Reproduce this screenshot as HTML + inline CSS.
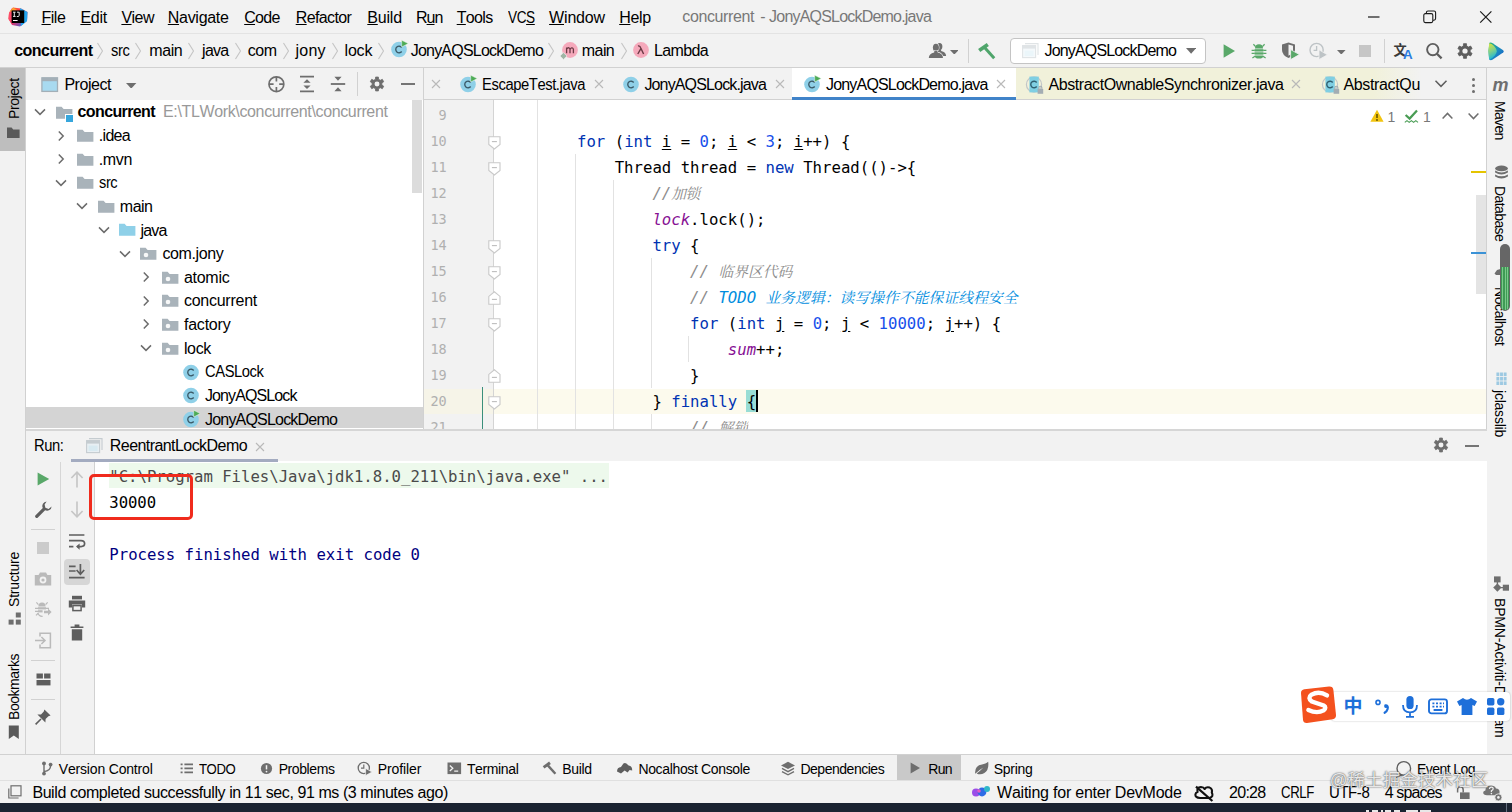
<!DOCTYPE html>
<html lang="en"><head><meta charset="utf-8"><title>concurrent - JonyAQSLockDemo.java</title>
<style>
html,body{margin:0;padding:0;}
body{width:1512px;height:812px;overflow:hidden;position:relative;background:#f2f2f2;font-family:'Liberation Sans', 'Noto Sans CJK SC', sans-serif;}
#root{position:absolute;left:0;top:0;width:1512px;height:812px;overflow:hidden;}
#root div,#root span.t,#root svg{position:absolute;}
span.t{white-space:pre;line-height:1;font-kerning:none;}
</style></head><body><div id="root">
<div style="left:0px;top:0px;width:1512px;height:33px;background:#f2f2f2;"></div>
<div style="left:0px;top:33px;width:1512px;height:1px;background:#e3e3e3;"></div>
<div style="left:0px;top:34px;width:1512px;height:33px;background:#f2f2f2;"></div>
<div style="left:0px;top:67px;width:1512px;height:1px;background:#d1d1d1;"></div>
<div style="left:0px;top:68px;width:25px;height:687px;background:#f2f2f2;"></div>
<div style="left:0px;top:68px;width:25px;height:83px;background:#bebebe;"></div>
<div style="left:25px;top:68px;width:1px;height:687px;background:#d1d1d1;"></div>
<div style="left:26px;top:68px;width:397px;height:32px;background:#f2f2f2;"></div>
<div style="left:26px;top:100px;width:397px;height:329px;background:#ffffff;"></div>
<div style="left:26px;top:407.4px;width:397px;height:21px;background:#d4d4d4;"></div>
<div style="left:412px;top:100px;width:10px;height:93px;background:#dcdcdc;"></div>
<div style="left:423px;top:68px;width:1px;height:361px;background:#d1d1d1;"></div>
<div style="left:424px;top:68px;width:1063px;height:32px;background:#f2f2f2;"></div>
<div style="left:424px;top:99px;width:1063px;height:1px;background:#d1d1d1;"></div>
<div style="left:792px;top:68px;width:224px;height:31px;background:#ffffff;"></div>
<div style="left:1016px;top:68px;width:406px;height:31px;background:linear-gradient(90deg,#f1f1da 0,#f1f1da 88%,#f2f2f2 100%);"></div>
<div style="left:792px;top:97px;width:224px;height:3px;background:#4083c9;"></div>
<div style="left:424px;top:100px;width:1063px;height:329px;background:#ffffff;"></div>
<div style="left:424px;top:100px;width:69px;height:329px;background:#f2f2f2;"></div>
<div style="left:424px;top:388.5px;width:1063px;height:25px;background:#fcfaed;"></div>
<div style="left:424px;top:388.5px;width:69px;height:25px;background:#f6f4e8;"></div>
<div style="left:493px;top:100px;width:1px;height:329px;background:#d4d4d4;"></div>
<div style="left:482px;top:387px;width:1.2px;height:42px;background:#3a8f7a;"></div>
<div style="left:537px;top:100px;width:1px;height:329px;background:#e2e2e2;"></div>
<div style="left:575px;top:154px;width:1px;height:275px;background:#e2e2e2;"></div>
<div style="left:613px;top:180px;width:1px;height:249px;background:#e2e2e2;"></div>
<div style="left:651px;top:258px;width:1px;height:130px;background:#e2e2e2;"></div>
<div style="left:688px;top:336px;width:1px;height:26px;background:#e2e2e2;"></div>
<div style="left:651px;top:414px;width:1px;height:15px;background:#e2e2e2;"></div>
<div style="left:1476px;top:195px;width:11px;height:99px;background:#e4e4e4;"></div>
<div style="left:1471px;top:171px;width:16px;height:2px;background:#e5c400;"></div>
<div style="left:1471px;top:252px;width:16px;height:2px;background:#3b92d6;"></div>
<div style="left:1487px;top:68px;width:25px;height:687px;background:#f2f2f2;"></div>
<div style="left:1486px;top:68px;width:1px;height:687px;background:#d1d1d1;"></div>
<div style="left:26px;top:429.2px;width:1461px;height:1.5px;background:#d6d6d6;"></div>
<div style="left:26px;top:430.5px;width:1461px;height:30.5px;background:#f2f2f2;"></div>
<div style="left:26px;top:461px;width:68px;height:294px;background:#f2f2f2;"></div>
<div style="left:59.5px;top:462px;width:1px;height:293px;background:#d6d6d6;"></div>
<div style="left:94px;top:461px;width:1px;height:294px;background:#d1d1d1;"></div>
<div style="left:95px;top:461px;width:1392px;height:294px;background:#ffffff;"></div>
<div style="left:71px;top:458.6px;width:207px;height:3px;background:#a3abc0;"></div>
<div style="left:109px;top:463px;width:500px;height:25px;background:#edf9ec;"></div>
<div style="left:64px;top:559px;width:26px;height:26px;background:#d6d6d6;border-radius:4px;"></div>
<div style="left:31px;top:529px;width:24px;height:1px;background:#d1d1d1;"></div>
<div style="left:31px;top:660px;width:24px;height:1px;background:#d1d1d1;"></div>
<div style="left:31px;top:699px;width:24px;height:1px;background:#d1d1d1;"></div>
<div style="left:0px;top:755px;width:1512px;height:26px;background:#f2f2f2;"></div>
<div style="left:0px;top:754px;width:1512px;height:1px;background:#d1d1d1;"></div>
<div style="left:897px;top:755px;width:64px;height:25px;background:#c9c9c9;"></div>
<div style="left:0px;top:780px;width:1512px;height:1px;background:#e0e0e0;"></div>
<div style="left:0px;top:781px;width:1512px;height:22px;background:#f2f2f2;"></div>
<div style="left:0px;top:802.5px;width:1512px;height:9.5px;background:#1b2331;"></div>
<svg style="left:8px;top:7px;" width="20" height="20" viewBox="0 0 20 20"><defs><linearGradient id="lg1" x1="0" y1="0" x2="1" y2="1"><stop offset="0" stop-color="#fc801d"/><stop offset="0.45" stop-color="#fe2857"/><stop offset="1" stop-color="#087cfa"/></linearGradient></defs>
<path d="M1 6 L5 0.5 L13 1.5 L19.5 5 L19 14 L12 19.5 L4 18 L0.5 12 Z" fill="url(#lg1)"/><path d="M12 1 L19.5 5 L19 14 L13 19 Z" fill="#21a5ee"/><path d="M1 6 L4 1 L8 4 L4 17 L0.5 12 Z" fill="#fd4c6a"/><path d="M1.5 5 L5 0.5 L9 3 Z" fill="#fda22c"/>
<rect x="3.6" y="3.4" width="12.6" height="12.6" fill="#000"/><rect x="5" y="13" width="4.6" height="1" fill="#fff"/>
<path d="M5 5.2 H7.6 M6.3 5.2 V9.4 M5 9.4 H7.6 M9 5.2 H11.2 V8.4 Q11.2 9.5 10 9.5 H8.8" fill="none" stroke="#fff" stroke-width="0.9"/></svg>
<svg style="left:1367px;top:10px;" width="14" height="14" viewBox="0 0 14 14"><path d="M1 7 H12.5" stroke="#1a1a1a" stroke-width="1.2"/></svg>
<svg style="left:1422px;top:9px;" width="16" height="16" viewBox="0 0 16 16"><rect x="1.8" y="4.6" width="9" height="9" rx="1.5" fill="none" stroke="#1a1a1a" stroke-width="1.1"/><path d="M4.4 4.4 V3.6 Q4.4 2 6 2 H12 Q13.6 2 13.6 3.6 V9.6 Q13.6 11.2 12 11.2 H11" fill="none" stroke="#1a1a1a" stroke-width="1.1"/></svg>
<svg style="left:1478px;top:8.5px;" width="16" height="16" viewBox="0 0 16 16"><path d="M2.2 2.4 L13.4 13.6 M13.4 2.4 L2.2 13.6" stroke="#1a1a1a" stroke-width="1.2" fill="none"/></svg>
<svg style="left:95.6px;top:42px;" width="8" height="18" viewBox="0 0 8 18"><path d="M1.5 1 L6.5 9 L1.5 17" fill="none" stroke="#c4c4c4" stroke-width="1.1"/></svg>
<svg style="left:133.5px;top:42px;" width="8" height="18" viewBox="0 0 8 18"><path d="M1.5 1 L6.5 9 L1.5 17" fill="none" stroke="#c4c4c4" stroke-width="1.1"/></svg>
<svg style="left:187.2px;top:42px;" width="8" height="18" viewBox="0 0 8 18"><path d="M1.5 1 L6.5 9 L1.5 17" fill="none" stroke="#c4c4c4" stroke-width="1.1"/></svg>
<svg style="left:233.8px;top:42px;" width="8" height="18" viewBox="0 0 8 18"><path d="M1.5 1 L6.5 9 L1.5 17" fill="none" stroke="#c4c4c4" stroke-width="1.1"/></svg>
<svg style="left:281.5px;top:42px;" width="8" height="18" viewBox="0 0 8 18"><path d="M1.5 1 L6.5 9 L1.5 17" fill="none" stroke="#c4c4c4" stroke-width="1.1"/></svg>
<svg style="left:331px;top:42px;" width="8" height="18" viewBox="0 0 8 18"><path d="M1.5 1 L6.5 9 L1.5 17" fill="none" stroke="#c4c4c4" stroke-width="1.1"/></svg>
<svg style="left:377px;top:42px;" width="8" height="18" viewBox="0 0 8 18"><path d="M1.5 1 L6.5 9 L1.5 17" fill="none" stroke="#c4c4c4" stroke-width="1.1"/></svg>
<svg style="left:547.4px;top:42px;" width="8" height="18" viewBox="0 0 8 18"><path d="M1.5 1 L6.5 9 L1.5 17" fill="none" stroke="#c4c4c4" stroke-width="1.1"/></svg>
<svg style="left:619.8px;top:42px;" width="8" height="18" viewBox="0 0 8 18"><path d="M1.5 1 L6.5 9 L1.5 17" fill="none" stroke="#c4c4c4" stroke-width="1.1"/></svg>
<svg style="left:389px;top:39.3px;" width="20" height="21" viewBox="0 0 20 21"><circle cx="10" cy="10.5" r="7.8" fill="#8fd0e8"/><path d="M12.7 8.5 A3.3 3.3 0 1 0 12.7 12.5" fill="none" stroke="#3b5a68" stroke-width="1.35"/><path d="M12.7 1.2 L19.2 4.6 L12.7 8 Z" fill="#4dab55" stroke="#eef7ee" stroke-width="0.5"/></svg>
<svg style="left:560.5px;top:40.5px;" width="18" height="18" viewBox="0 0 18 18"><circle cx="9" cy="9" r="7.9" fill="#f5a9bb"/><path d="M5.6 12.2 V6.6 M5.6 8 Q6.9 6.2 8.2 7 Q9 7.5 9 8.6 V12.2 M9 8.4 Q10.2 6.2 11.6 7 Q12.4 7.5 12.4 8.6 V12.2" fill="none" stroke="#6b3a45" stroke-width="1.3"/></svg>
<svg style="left:559px;top:50.5px;" width="9" height="9" viewBox="0 0 9 9"><path d="M1 5 L4.5 1.6 L8 5 L4.5 8.4 Z" fill="#9fb5a5" stroke="#f2f2f2" stroke-width="0.6"/></svg>
<svg style="left:631.5px;top:40.5px;" width="18" height="18" viewBox="0 0 18 18"><circle cx="9" cy="9" r="7.9" fill="#f5a9bb"/><path d="M6 5 Q8 4.4 8.8 7 L11.6 13 M8.9 7.6 L5.8 13" fill="none" stroke="#6b3a45" stroke-width="1.4"/></svg>
<svg style="left:927px;top:42px;" width="22" height="18" viewBox="0 0 22 18"><g fill="#6e6e6e" transform="translate(4.4,-0.6) scale(0.92)"><ellipse cx="8.9" cy="5.6" rx="3" ry="3.9"/><path d="M1.8 16 Q1.9 11.6 7.2 10.4 L7.4 8.6 H10.4 L10.6 10.4 Q15.9 11.6 16 16 Z"/></g><g fill="#6e6e6e" stroke="#f2f2f2" stroke-width="1.1" paint-order="stroke"><ellipse cx="8.9" cy="5.6" rx="3" ry="3.9"/><path d="M1.8 16 Q1.9 11.6 7.2 10.4 L7.4 8.6 H10.4 L10.6 10.4 Q15.9 11.6 16 16 Z"/></g></svg>
<svg style="left:949.7px;top:49.5px;" width="8.6" height="4.6" viewBox="0 0 8.6 4.6"><path d="M0 0 H8.6 L4.3 4.6 Z" fill="#6e6e6e"/></svg>
<div style="left:968px;top:39px;width:1px;height:24px;background:#d1d1d1;"></div>
<svg style="left:977px;top:41.7px;" width="20" height="19" viewBox="0 0 20 19"><path d="M2.2 8.4 L10.8 2.4" stroke="#4fa56b" stroke-width="3.7" fill="none"/><path d="M7.6 5.6 L17.2 16.2" stroke="#4fa56b" stroke-width="3" fill="none"/></svg>
<div style="left:1010px;top:37.5px;width:196px;height:26px;box-sizing:border-box;border:1px solid #c4c4c4;border-radius:4px;background:#fff;"></div>
<svg style="left:1021.5px;top:43px;" width="17" height="16" viewBox="0 0 17 16"><g opacity="0.3"><rect x="0.6" y="2.6" width="13" height="12" fill="#dfeef5" stroke="#9aa7b0" stroke-width="1.1"/><rect x="0.6" y="2.6" width="13" height="3" fill="#9aa7b0"/><path d="M3 0.6 H16 V12" fill="none" stroke="#9aa7b0" stroke-width="1.1"/><rect x="2.6" y="7.6" width="9" height="5.4" fill="#bfe3f1"/></g></svg>
<svg style="left:1185.9px;top:48.4px;" width="10.2" height="5.8" viewBox="0 0 10.2 5.8"><path d="M0 0 H10.2 L5.1 5.8 Z" fill="#6e6e6e"/></svg>
<svg style="left:1223px;top:44px;" width="13" height="14" viewBox="0 0 13 14"><path d="M0.6 0.3 L12 7 L0.6 13.7 Z" fill="#59a869"/></svg>
<svg style="left:1251px;top:43px;" width="16" height="16" viewBox="0 0 16 16"><path d="M4 5.4 Q4 1.2 8 1.2 Q12 1.2 12 5.4 Z" fill="#59a869"/><rect x="3.6" y="6.2" width="8.8" height="2.3" fill="#59a869"/><rect x="3.6" y="9.3" width="8.8" height="2.3" fill="#59a869"/><path d="M3.6 12.4 H12.4 Q12 15.6 8 15.6 Q4 15.6 3.6 12.4 Z" fill="#59a869"/>
<path d="M3.8 7.3 H0.6 M12.2 7.3 H15.4 M3.8 10.4 H0.6 M12.2 10.4 H15.4 M4 13.2 L1.4 15 M12 13.2 L14.6 15 M4.6 3.6 L2.4 1.2 M11.4 3.6 L13.6 1.2" stroke="#59a869" stroke-width="1.3" fill="none"/></svg>
<svg style="left:1281px;top:42px;" width="19" height="18" viewBox="0 0 19 18"><path d="M1 2.4 L7.5 0.6 L14 2.4 V8 Q14 13 7.5 16 Q1 13 1 8 Z" fill="#6e6e6e"/><path d="M7.5 2.6 L12 3.8 V8 Q12 11.4 7.5 13.8 Z" fill="#f2f2f2"/><path d="M9.6 7.6 L18.4 12.6 L9.6 17.6 Z" fill="#59a869" stroke="#f2f2f2" stroke-width="0.8"/></svg>
<svg style="left:1309px;top:42px;" width="19" height="18" viewBox="0 0 19 18"><g opacity="0.45"><circle cx="7.6" cy="8" r="6.6" fill="none" stroke="#7f8b91" stroke-width="1.4"/><path d="M7.6 4 V8.4 H4.6" fill="none" stroke="#7f8b91" stroke-width="1.3"/><path d="M10 7.8 L18.4 12.8 L10 17.6 Z" fill="#7f8b91" stroke="#f2f2f2" stroke-width="0.8"/></g></svg>
<svg style="left:1337.0px;top:49.5px;" width="8.6" height="4.6" viewBox="0 0 8.6 4.6"><path d="M0 0 H8.6 L4.3 4.6 Z" fill="#6e6e6e"/></svg>
<div style="left:1359px;top:45.3px;width:12px;height:11.5px;background:#c6c6c6;"></div>
<div style="left:1384px;top:39px;width:1px;height:24px;background:#d1d1d1;"></div>
<svg style="left:1425px;top:42px;" width="18" height="18" viewBox="0 0 18 18"><circle cx="7.8" cy="7.6" r="5.7" fill="none" stroke="#5e5e5e" stroke-width="1.9"/><path d="M11.9 11.7 L16.6 16.4" stroke="#5e5e5e" stroke-width="2.3"/></svg>
<svg style="left:1455.7px;top:42.3px;" width="18" height="18" viewBox="0 0 18 18"><path d="M7.51 1.65 L10.49 1.65 L10.65 4.02 L12.49 5.08 L14.62 4.03 L16.11 6.62 L14.14 7.94 L14.14 10.06 L16.11 11.38 L14.62 13.97 L12.49 12.92 L10.65 13.98 L10.49 16.35 L7.51 16.35 L7.35 13.98 L5.51 12.92 L3.38 13.97 L1.89 11.38 L3.86 10.06 L3.86 7.94 L1.89 6.62 L3.38 4.03 L5.51 5.08 L7.35 4.02 Z" fill="#5e5e5e" stroke="#5e5e5e" stroke-width="0.8" stroke-linejoin="round"/><circle cx="9" cy="9" r="2.62" fill="#f2f2f2"/></svg>
<svg style="left:1487px;top:41.5px;" width="18" height="19" viewBox="0 0 18 19"><defs><linearGradient id="lg2" x1="0" y1="0" x2="0.3" y2="1"><stop offset="0" stop-color="#dbe63c"/><stop offset="0.55" stop-color="#7fd08a"/><stop offset="1" stop-color="#1fb6d6"/></linearGradient><linearGradient id="lg3" x1="0" y1="0" x2="1" y2="1"><stop offset="0" stop-color="#22b573"/><stop offset="0.5" stop-color="#1a8fc0"/><stop offset="1" stop-color="#1a55c8"/></linearGradient></defs>
<path d="M2.4 0.8 Q4 0.2 5.6 1.2 L16.2 8.2 Q17.4 9.4 16.2 10.6 L5.4 17.8 Q3.6 18.8 2.2 17.6 Q0.6 9 2.4 0.8 Z" fill="url(#lg3)"/><path d="M2.2 1.6 Q3.4 1.2 4.6 2 Q9.6 5.6 9.8 9.4 Q9.4 13 3.4 17.2 Q2.4 17.6 2 16.8 Q0.6 9 2.2 1.6 Z" fill="url(#lg2)"/></svg>
<svg style="left:7px;top:127px;" width="13" height="12" viewBox="0 0 13 12"><path d="M0 0.6 H4.6 L6.2 2.4 H12.6 V11 H0 Z" fill="#5a5a5a"/></svg>
<svg style="left:7.5px;top:612px;" width="14" height="14" viewBox="0 0 14 14"><rect x="7.8" y="0.5" width="5" height="5" fill="#6e6e6e"/><rect x="0.6" y="7.6" width="5" height="5" fill="#6e6e6e"/><rect x="7.8" y="7.6" width="5" height="5" fill="#6e6e6e"/></svg>
<svg style="left:8px;top:725px;" width="12" height="15" viewBox="0 0 12 15"><path d="M0.8 0.6 H10.8 V14 L5.8 10.4 L0.8 14 Z" fill="#5a5a5a"/></svg>
<svg style="left:41px;top:77.3px;" width="18" height="16" viewBox="0 0 18 16"><rect x="0.9" y="0.8" width="15.6" height="13.6" fill="#a8daf0" stroke="#a3afb7" stroke-width="1.3"/><rect x="0.9" y="0.8" width="15.6" height="3.4" fill="#a3afb7"/></svg>
<svg style="left:126.3px;top:82.60000000000001px;" width="10.4" height="5.6" viewBox="0 0 10.4 5.6"><path d="M0 0 H10.4 L5.2 5.6 Z" fill="#6e6e6e"/></svg>
<svg style="left:267px;top:75px;" width="19" height="19" viewBox="0 0 19 19"><circle cx="9.4" cy="9.2" r="7.4" fill="none" stroke="#6e6e6e" stroke-width="1.7"/><path d="M9.4 1.7 V6.4 M9.4 12 V16.7 M1.9 9.2 H6.6 M12.2 9.2 H16.9" stroke="#6e6e6e" stroke-width="1.7"/></svg>
<svg style="left:299px;top:75px;" width="16" height="18" viewBox="0 0 16 18"><path d="M1 1.6 H15 M1 16.4 H15" stroke="#6e6e6e" stroke-width="1.8"/><path d="M4.4 7.8 L8 4.2 L11.6 7.8 Z M4.4 10.4 L8 14 L11.6 10.4 Z" fill="#6e6e6e"/></svg>
<svg style="left:330px;top:75px;" width="16" height="18" viewBox="0 0 16 18"><path d="M0.8 9 H15.2" stroke="#6e6e6e" stroke-width="1.8"/><path d="M4.4 1.8 L8 5.8 L11.6 1.8 Z M4.4 16.2 L8 12.2 L11.6 16.2 Z" fill="#6e6e6e"/></svg>
<div style="left:357px;top:72px;width:1px;height:24px;background:#d1d1d1;"></div>
<svg style="left:368px;top:75.3px;" width="18" height="18" viewBox="0 0 18 18"><path d="M7.59 2.04 L10.41 2.04 L10.56 4.28 L12.30 5.29 L14.32 4.30 L15.73 6.74 L13.87 8.00 L13.87 10.00 L15.73 11.26 L14.32 13.70 L12.30 12.71 L10.56 13.72 L10.41 15.96 L7.59 15.96 L7.44 13.72 L5.70 12.71 L3.68 13.70 L2.27 11.26 L4.13 10.00 L4.13 8.00 L2.27 6.74 L3.68 4.30 L5.70 5.29 L7.44 4.28 Z" fill="#6e6e6e" stroke="#6e6e6e" stroke-width="0.8" stroke-linejoin="round"/><circle cx="9" cy="9" r="2.48" fill="#f2f2f2"/></svg>
<div style="left:400.8px;top:83.3px;width:14.4px;height:2px;background:#757575;"></div>
<svg style="left:33.6px;top:107.9px;" width="12" height="8" viewBox="0 0 12 8"><path d="M1 1.4 L6 6.4 L11 1.4" fill="none" stroke="#6c6c6c" stroke-width="1.5"/></svg>
<svg style="left:55.5px;top:105.8px;" width="17" height="13" viewBox="0 0 17 13"><path d="M0 0.8 H5.6 L7.6 3 H16.4 V12.8 H0 Z" fill="#a9b3ba"/></svg>
<div style="left:66px;top:115px;width:7.2px;height:6.8px;background:#37a6dc;outline:1px solid #fff;"></div>
<svg style="left:57px;top:129.52px;" width="8" height="12" viewBox="0 0 8 12"><path d="M1.8 1.4 L6.2 6 L1.8 10.6" fill="none" stroke="#6c6c6c" stroke-width="1.5"/></svg>
<svg style="left:76.8px;top:128.92000000000002px;" width="17" height="13" viewBox="0 0 17 13"><path d="M0 0.8 H5.6 L7.6 3 H16.4 V12.8 H0 Z" fill="#a9b3ba"/></svg>
<svg style="left:57px;top:153.14000000000001px;" width="8" height="12" viewBox="0 0 8 12"><path d="M1.8 1.4 L6.2 6 L1.8 10.6" fill="none" stroke="#6c6c6c" stroke-width="1.5"/></svg>
<svg style="left:76.8px;top:152.54000000000002px;" width="17" height="13" viewBox="0 0 17 13"><path d="M0 0.8 H5.6 L7.6 3 H16.4 V12.8 H0 Z" fill="#a9b3ba"/></svg>
<svg style="left:55px;top:178.76px;" width="12" height="8" viewBox="0 0 12 8"><path d="M1 1.4 L6 6.4 L11 1.4" fill="none" stroke="#6c6c6c" stroke-width="1.5"/></svg>
<svg style="left:76.8px;top:176.16px;" width="17" height="13" viewBox="0 0 17 13"><path d="M0 0.8 H5.6 L7.6 3 H16.4 V12.8 H0 Z" fill="#a9b3ba"/></svg>
<svg style="left:76.3px;top:202.38px;" width="12" height="8" viewBox="0 0 12 8"><path d="M1 1.4 L6 6.4 L11 1.4" fill="none" stroke="#6c6c6c" stroke-width="1.5"/></svg>
<svg style="left:98.2px;top:199.78px;" width="17" height="13" viewBox="0 0 17 13"><path d="M0 0.8 H5.6 L7.6 3 H16.4 V12.8 H0 Z" fill="#a9b3ba"/></svg>
<svg style="left:97.6px;top:226.0px;" width="12" height="8" viewBox="0 0 12 8"><path d="M1 1.4 L6 6.4 L11 1.4" fill="none" stroke="#6c6c6c" stroke-width="1.5"/></svg>
<svg style="left:118.9px;top:223.4px;" width="17" height="13" viewBox="0 0 17 13"><path d="M0 0.8 H5.6 L7.6 3 H16.4 V12.8 H0 Z" fill="#8fd0e8"/></svg>
<svg style="left:119px;top:249.62px;" width="12" height="8" viewBox="0 0 12 8"><path d="M1 1.4 L6 6.4 L11 1.4" fill="none" stroke="#6c6c6c" stroke-width="1.5"/></svg>
<svg style="left:140.4px;top:247.02px;" width="17" height="13" viewBox="0 0 17 13"><path d="M0 0.8 H5.6 L7.6 3 H16.4 V12.8 H0 Z" fill="#a9b3ba"/><circle cx="6" cy="8" r="2.3" fill="#ffffff" opacity="0.9"/></svg>
<svg style="left:142.4px;top:271.24px;" width="8" height="12" viewBox="0 0 8 12"><path d="M1.8 1.4 L6.2 6 L1.8 10.6" fill="none" stroke="#6c6c6c" stroke-width="1.5"/></svg>
<svg style="left:161.8px;top:270.64px;" width="17" height="13" viewBox="0 0 17 13"><path d="M0 0.8 H5.6 L7.6 3 H16.4 V12.8 H0 Z" fill="#a9b3ba"/><circle cx="6" cy="8" r="2.3" fill="#ffffff" opacity="0.9"/></svg>
<svg style="left:142.4px;top:294.86px;" width="8" height="12" viewBox="0 0 8 12"><path d="M1.8 1.4 L6.2 6 L1.8 10.6" fill="none" stroke="#6c6c6c" stroke-width="1.5"/></svg>
<svg style="left:161.8px;top:294.26px;" width="17" height="13" viewBox="0 0 17 13"><path d="M0 0.8 H5.6 L7.6 3 H16.4 V12.8 H0 Z" fill="#a9b3ba"/><circle cx="6" cy="8" r="2.3" fill="#ffffff" opacity="0.9"/></svg>
<svg style="left:142.4px;top:318.48px;" width="8" height="12" viewBox="0 0 8 12"><path d="M1.8 1.4 L6.2 6 L1.8 10.6" fill="none" stroke="#6c6c6c" stroke-width="1.5"/></svg>
<svg style="left:161.8px;top:317.88px;" width="17" height="13" viewBox="0 0 17 13"><path d="M0 0.8 H5.6 L7.6 3 H16.4 V12.8 H0 Z" fill="#a9b3ba"/><circle cx="6" cy="8" r="2.3" fill="#ffffff" opacity="0.9"/></svg>
<svg style="left:140.4px;top:344.1px;" width="12" height="8" viewBox="0 0 12 8"><path d="M1 1.4 L6 6.4 L11 1.4" fill="none" stroke="#6c6c6c" stroke-width="1.5"/></svg>
<svg style="left:161.8px;top:341.5px;" width="17" height="13" viewBox="0 0 17 13"><path d="M0 0.8 H5.6 L7.6 3 H16.4 V12.8 H0 Z" fill="#a9b3ba"/><circle cx="6" cy="8" r="2.3" fill="#ffffff" opacity="0.9"/></svg>
<svg style="left:181.2px;top:361.52000000000004px;" width="20" height="21" viewBox="0 0 20 21"><circle cx="10" cy="10.5" r="7.8" fill="#8fd0e8"/><path d="M12.7 8.5 A3.3 3.3 0 1 0 12.7 12.5" fill="none" stroke="#3b5a68" stroke-width="1.35"/></svg>
<svg style="left:181.2px;top:385.14000000000004px;" width="20" height="21" viewBox="0 0 20 21"><circle cx="10" cy="10.5" r="7.8" fill="#8fd0e8"/><path d="M12.7 8.5 A3.3 3.3 0 1 0 12.7 12.5" fill="none" stroke="#3b5a68" stroke-width="1.35"/></svg>
<svg style="left:181.2px;top:408.76000000000005px;" width="20" height="21" viewBox="0 0 20 21"><circle cx="10" cy="10.5" r="7.8" fill="#8fd0e8"/><path d="M12.7 8.5 A3.3 3.3 0 1 0 12.7 12.5" fill="none" stroke="#3b5a68" stroke-width="1.35"/><path d="M12.7 1.2 L19.2 4.6 L12.7 8 Z" fill="#4dab55" stroke="#eef7ee" stroke-width="0.5"/></svg>
<svg style="left:430.3px;top:78px;" width="12" height="12" viewBox="0 0 12 12"><path d="M2 2 L10 10 M10 2 L2 10" stroke="#b9b9b9" stroke-width="1.1" fill="none"/></svg>
<svg style="left:458px;top:73.5px;" width="20" height="21" viewBox="0 0 20 21"><circle cx="10" cy="10.5" r="7.8" fill="#8fd0e8"/><path d="M12.7 8.5 A3.3 3.3 0 1 0 12.7 12.5" fill="none" stroke="#3b5a68" stroke-width="1.35"/><path d="M12.7 1.2 L19.2 4.6 L12.7 8 Z" fill="#4dab55" stroke="#eef7ee" stroke-width="0.5"/></svg>
<svg style="left:593px;top:78px;" width="12" height="12" viewBox="0 0 12 12"><path d="M2 2 L10 10 M10 2 L2 10" stroke="#b9b9b9" stroke-width="1.1" fill="none"/></svg>
<svg style="left:620.5px;top:73.5px;" width="20" height="21" viewBox="0 0 20 21"><circle cx="10" cy="10.5" r="7.8" fill="#8fd0e8"/><path d="M12.7 8.5 A3.3 3.3 0 1 0 12.7 12.5" fill="none" stroke="#3b5a68" stroke-width="1.35"/></svg>
<svg style="left:773.8px;top:78px;" width="12" height="12" viewBox="0 0 12 12"><path d="M2 2 L10 10 M10 2 L2 10" stroke="#b9b9b9" stroke-width="1.1" fill="none"/></svg>
<svg style="left:802.3px;top:73.5px;" width="20" height="21" viewBox="0 0 20 21"><circle cx="10" cy="10.5" r="7.8" fill="#8fd0e8"/><path d="M12.7 8.5 A3.3 3.3 0 1 0 12.7 12.5" fill="none" stroke="#3b5a68" stroke-width="1.35"/><path d="M12.7 1.2 L19.2 4.6 L12.7 8 Z" fill="#4dab55" stroke="#eef7ee" stroke-width="0.5"/></svg>
<svg style="left:995px;top:78px;" width="12" height="12" viewBox="0 0 12 12"><path d="M2 2 L10 10 M10 2 L2 10" stroke="#b9b9b9" stroke-width="1.1" fill="none"/></svg>
<svg style="left:1024px;top:73.5px;" width="20" height="21" viewBox="0 0 20 21"><circle cx="10" cy="10.5" r="7.6" fill="none" stroke="#c2c6c8" stroke-width="1.2"/><rect x="5.4" y="2.6" width="9.4" height="15.8" fill="#7fcfe3"/><path d="M12.7 8.5 A3.3 3.3 0 1 0 12.7 12.5" fill="none" stroke="#2f5f70" stroke-width="1.4"/><rect x="13.6" y="15" width="5.6" height="4.8" fill="#a3adb3"/><path d="M14.9 15 V13.8 A1.5 1.5 0 0 1 17.9 13.8 V15" fill="none" stroke="#a3adb3" stroke-width="1.1"/></svg>
<svg style="left:1290px;top:78px;" width="12" height="12" viewBox="0 0 12 12"><path d="M2 2 L10 10 M10 2 L2 10" stroke="#b9b9b9" stroke-width="1.1" fill="none"/></svg>
<svg style="left:1319.5px;top:73.5px;" width="20" height="21" viewBox="0 0 20 21"><circle cx="10" cy="10.5" r="7.6" fill="none" stroke="#c2c6c8" stroke-width="1.2"/><rect x="5.4" y="2.6" width="9.4" height="15.8" fill="#7fcfe3"/><path d="M12.7 8.5 A3.3 3.3 0 1 0 12.7 12.5" fill="none" stroke="#2f5f70" stroke-width="1.4"/><rect x="13.6" y="15" width="5.6" height="4.8" fill="#a3adb3"/><path d="M14.9 15 V13.8 A1.5 1.5 0 0 1 17.9 13.8 V15" fill="none" stroke="#a3adb3" stroke-width="1.1"/></svg>
<svg style="left:1434px;top:79px;" width="14" height="10" viewBox="0 0 14 10"><path d="M1.5 1.8 L7 7.4 L12.5 1.8" fill="none" stroke="#5e5e5e" stroke-width="1.5"/></svg>
<div style="left:1472px;top:77.5px;width:3px;height:3px;border-radius:50%;background:#6e6e6e;"></div>
<div style="left:1472px;top:83.8px;width:3px;height:3px;border-radius:50%;background:#6e6e6e;"></div>
<div style="left:1472px;top:90.1px;width:3px;height:3px;border-radius:50%;background:#6e6e6e;"></div>
<svg style="left:1370px;top:109px;" width="14" height="14" viewBox="0 0 14 14"><path d="M7 0.8 L13.6 12.8 H0.4 Z" fill="#f2c40f"/><path d="M7 5 V9" stroke="#5a4a00" stroke-width="1.5"/><circle cx="7" cy="11" r="0.9" fill="#5a4a00"/></svg>
<svg style="left:1404px;top:109px;" width="15" height="15" viewBox="0 0 15 15"><path d="M1.6 6 L5.6 9.6 L13 1.6" fill="none" stroke="#499c54" stroke-width="2.2"/><path d="M0.8 13.4 L3 11.6 L5.2 13.4 L7.4 11.6 L9.6 13.4 L11.8 11.6 L14 13.4" fill="none" stroke="#499c54" stroke-width="1.1"/></svg>
<svg style="left:1441px;top:111px;" width="13" height="9" viewBox="0 0 13 9"><path d="M1.6 7.4 L6.5 2.4 L11.4 7.4" fill="none" stroke="#6e6e6e" stroke-width="1.5"/></svg>
<svg style="left:1467px;top:112px;" width="13" height="9" viewBox="0 0 13 9"><path d="M1.6 1.6 L6.5 6.6 L11.4 1.6" fill="none" stroke="#6e6e6e" stroke-width="1.5"/></svg>
<svg style="left:488px;top:135.5px;" width="13" height="14" viewBox="0 0 13 14"><path d="M0.8 0.7 H12 V8.4 L6.4 13 L0.8 8.4 Z" fill="#fff" stroke="#c9c9c9" stroke-width="1.1"/><path d="M3.9 5.6 H8.9" stroke="#bdbdbd" stroke-width="1.1"/></svg>
<svg style="left:488px;top:161.5px;" width="13" height="14" viewBox="0 0 13 14"><path d="M0.8 0.7 H12 V8.4 L6.4 13 L0.8 8.4 Z" fill="#fff" stroke="#c9c9c9" stroke-width="1.1"/><path d="M3.9 5.6 H8.9" stroke="#bdbdbd" stroke-width="1.1"/></svg>
<svg style="left:488px;top:239.5px;" width="13" height="14" viewBox="0 0 13 14"><path d="M0.8 0.7 H12 V8.4 L6.4 13 L0.8 8.4 Z" fill="#fff" stroke="#c9c9c9" stroke-width="1.1"/><path d="M3.9 5.6 H8.9" stroke="#bdbdbd" stroke-width="1.1"/></svg>
<svg style="left:488px;top:265.5px;" width="13" height="14" viewBox="0 0 13 14"><path d="M0.8 0.7 H12 V8.4 L6.4 13 L0.8 8.4 Z" fill="#fff" stroke="#c9c9c9" stroke-width="1.1"/><path d="M3.9 5.6 H8.9" stroke="#bdbdbd" stroke-width="1.1"/></svg>
<svg style="left:488px;top:317.5px;" width="13" height="14" viewBox="0 0 13 14"><path d="M0.8 0.7 H12 V8.4 L6.4 13 L0.8 8.4 Z" fill="#fff" stroke="#c9c9c9" stroke-width="1.1"/><path d="M3.9 5.6 H8.9" stroke="#bdbdbd" stroke-width="1.1"/></svg>
<svg style="left:488px;top:395.5px;" width="13" height="14" viewBox="0 0 13 14"><path d="M0.8 0.7 H12 V8.4 L6.4 13 L0.8 8.4 Z" fill="#fff" stroke="#c9c9c9" stroke-width="1.1"/><path d="M3.9 5.6 H8.9" stroke="#bdbdbd" stroke-width="1.1"/></svg>
<svg style="left:488px;top:290.5px;" width="13" height="14" viewBox="0 0 13 14"><path d="M0.8 13.2 H12 V5.4 L6.4 0.8 L0.8 5.4 Z" fill="#fff" stroke="#c9c9c9" stroke-width="1.1"/><path d="M3.9 8.4 H8.9" stroke="#bdbdbd" stroke-width="1.1"/></svg>
<svg style="left:488px;top:368.5px;" width="13" height="14" viewBox="0 0 13 14"><path d="M0.8 13.2 H12 V5.4 L6.4 0.8 L0.8 5.4 Z" fill="#fff" stroke="#c9c9c9" stroke-width="1.1"/><path d="M3.9 8.4 H8.9" stroke="#bdbdbd" stroke-width="1.1"/></svg>
<div style="left:746px;top:390px;width:9.5px;height:22px;background:#99ddd5;"></div>
<div style="left:755.5px;top:390px;width:2px;height:22px;background:#000;"></div>
<svg style="left:1494px;top:165px;" width="15" height="16" viewBox="0 0 15 16"><ellipse cx="7.5" cy="3.4" rx="6.4" ry="2.8" fill="#6e6e6e"/><path d="M1.1 5.6 Q7.5 9.4 13.9 5.6 V7.6 Q7.5 11.4 1.1 7.6 Z M1.1 9.4 Q7.5 13.2 13.9 9.4 V11.6 Q7.5 15.6 1.1 11.6 Z" fill="#6e6e6e"/></svg>
<svg style="left:1494px;top:268px;" width="7" height="8" viewBox="0 0 7 8"><path d="M0.5 5.5 L3 2 L6.5 1 V7 H2 Z" fill="#6e6e6e"/></svg>
<svg style="left:1495.6px;top:372px;" width="11" height="13.5" viewBox="0 0 13.6 13.6" preserveAspectRatio="none"><g fill="#8fc3e0" opacity="0.85"><rect x="0.5" y="0.5" width="3.6" height="3.6"/><rect x="5" y="0.5" width="3.6" height="3.6"/><rect x="9.5" y="0.5" width="3.6" height="3.6"/><rect x="0.5" y="5" width="3.6" height="3.6"/><rect x="5" y="5" width="3.6" height="3.6"/><rect x="9.5" y="5" width="3.6" height="3.6"/><rect x="0.5" y="9.5" width="3.6" height="3.6"/><rect x="5" y="9.5" width="3.6" height="3.6"/><rect x="9.5" y="9.5" width="3.6" height="3.6"/></g></svg>
<svg style="left:1493px;top:575px;" width="17" height="18" viewBox="0 0 17 18"><rect x="1" y="1.4" width="6.6" height="6" fill="#6e6e6e"/><path d="M4.4 8.4 L8.6 12.6 L4.4 16.8 L0.2 12.6 Z" fill="#6e6e6e"/><rect x="9.8" y="9.7" width="6.2" height="6" fill="#6e6e6e"/><path d="M4.4 7 V10 M8 12.6 H10" stroke="#6e6e6e" stroke-width="1.4"/></svg>
<svg style="left:86.3px;top:438px;" width="17" height="16" viewBox="0 0 17 16"><g opacity="0.5"><rect x="0.6" y="2.6" width="13" height="12" fill="#dfeef5" stroke="#9aa7b0" stroke-width="1.1"/><rect x="0.6" y="2.6" width="13" height="3" fill="#9aa7b0"/><path d="M3 0.6 H16 V12" fill="none" stroke="#9aa7b0" stroke-width="1.1"/><rect x="2.6" y="7.6" width="9" height="5.4" fill="#bfe3f1"/></g></svg>
<svg style="left:254px;top:440.5px;" width="12" height="12" viewBox="0 0 12 12"><path d="M2 2 L10 10 M10 2 L2 10" stroke="#b9b9b9" stroke-width="1.1" fill="none"/></svg>
<svg style="left:1432px;top:436.4px;" width="18" height="18" viewBox="0 0 18 18"><path d="M7.59 2.04 L10.41 2.04 L10.56 4.28 L12.30 5.29 L14.32 4.30 L15.73 6.74 L13.87 8.00 L13.87 10.00 L15.73 11.26 L14.32 13.70 L12.30 12.71 L10.56 13.72 L10.41 15.96 L7.59 15.96 L7.44 13.72 L5.70 12.71 L3.68 13.70 L2.27 11.26 L4.13 10.00 L4.13 8.00 L2.27 6.74 L3.68 4.30 L5.70 5.29 L7.44 4.28 Z" fill="#6e6e6e" stroke="#6e6e6e" stroke-width="0.8" stroke-linejoin="round"/><circle cx="9" cy="9" r="2.48" fill="#f2f2f2"/></svg>
<div style="left:1464.7px;top:444.7px;width:14.4px;height:2px;background:#757575;"></div>
<svg style="left:37px;top:472px;" width="13" height="14" viewBox="0 0 13 14"><path d="M0.6 0.4 L12.2 7 L0.6 13.6 Z" fill="#59a869"/></svg>
<svg style="left:34px;top:500px;" width="19" height="19" viewBox="0 0 19 19"><path d="M12.6 1.4 A4.6 4.6 0 0 0 8.8 8 L1.6 15.2 A1.6 1.6 0 0 0 3.9 17.5 L11.1 10.3 A4.6 4.6 0 0 0 17.6 6.4 L14.6 9 L11.4 7.8 L10.6 4.6 Z" fill="#5e5e5e"/></svg>
<div style="left:37px;top:542px;width:12px;height:12px;background:#cbcbcb;"></div>
<svg style="left:34px;top:571px;" width="18" height="16" viewBox="0 0 18 16"><g opacity="0.42"><path d="M0.8 4 H4.6 L6 1.6 H12 L13.4 4 H17.2 V14.6 H0.8 Z" fill="#6e6e6e"/><circle cx="9" cy="9" r="3.4" fill="#f2f2f2"/><circle cx="9" cy="9" r="1.6" fill="#6e6e6e"/></g></svg>
<svg style="left:34px;top:601px;" width="18" height="18" viewBox="0 0 18 18"><g opacity="0.42" fill="#6e6e6e"><path d="M4.4 5.4 Q4.4 1.6 8 1.6 Q11.6 1.6 11.6 5.4 Z"/><rect x="4" y="6.2" width="8" height="2.2"/><rect x="4" y="9.2" width="4.6" height="2.2"/><path d="M4.4 3.6 L2.4 1.4 M11.6 3.6 L13.6 1.4 M4 7.3 H1 M12 7.3 H15 M4 10.3 H1" stroke="#6e6e6e" stroke-width="1.2"/><path d="M10 9.8 H14 V7.6 L17.6 11 L14 14.4 V12.2 H10 Z"/><path d="M4.4 12 L2 14.4 M4 12.2 Q5 15.6 8.6 15.4" stroke="#6e6e6e" stroke-width="1.2" fill="none"/></g></svg>
<svg style="left:34px;top:632px;" width="18" height="17" viewBox="0 0 18 17"><g opacity="0.42"><path d="M6 4.6 V1.2 H16.4 V15.8 H6 V12.4" fill="none" stroke="#6e6e6e" stroke-width="1.5"/><path d="M1 8.5 H10.6 M7.4 5 L11 8.5 L7.4 12" fill="none" stroke="#6e6e6e" stroke-width="1.5"/></g></svg>
<svg style="left:36px;top:672px;" width="15" height="15" viewBox="0 0 15 15"><rect x="0.5" y="1.5" width="6.4" height="5" fill="#5e5e5e"/><rect x="8.1" y="1.5" width="6.4" height="5" fill="#5e5e5e"/><rect x="0.5" y="8" width="14" height="5.4" fill="#5e5e5e"/></svg>
<svg style="left:34px;top:708px;" width="18" height="18" viewBox="0 0 18 18"><path d="M10.4 1.4 L16.6 7.6 L14.4 8.2 L11.6 11 L11.4 14.6 L3.4 6.6 L7 6.4 L9.8 3.6 Z" fill="#5e5e5e"/><path d="M7 11 L1.6 16.4" stroke="#5e5e5e" stroke-width="1.6"/></svg>
<svg style="left:69px;top:470px;" width="16" height="19" viewBox="0 0 16 19"><g opacity="0.5"><path d="M8 17.6 V2.4 M2.4 8 L8 2.2 L13.6 8" fill="none" stroke="#9a9a9a" stroke-width="1.6"/></g></svg>
<svg style="left:69px;top:500px;" width="16" height="19" viewBox="0 0 16 19"><g opacity="0.5"><path d="M8 1.4 V16.6 M2.4 11 L8 16.8 L13.6 11" fill="none" stroke="#9a9a9a" stroke-width="1.6"/></g></svg>
<svg style="left:68px;top:533px;" width="18" height="17" viewBox="0 0 18 17"><path d="M1 2 H16.4 M1 7.6 H13 Q16.6 7.6 16.6 10.6 Q16.6 13.6 13 13.6 H9 M1 13.6 H5.4" fill="none" stroke="#5e5e5e" stroke-width="1.7"/><path d="M11.6 10.4 L8 13.6 L11.6 16.8 Z" fill="#5e5e5e"/></svg>
<svg style="left:68px;top:563px;" width="18" height="17" viewBox="0 0 18 17"><path d="M1 3.4 H7.6 M1 8 H7.6 M1 14.6 H16.6" fill="none" stroke="#5e5e5e" stroke-width="1.7"/><path d="M12.4 1 V10.6 M8.6 7 L12.4 11.2 L16.2 7" fill="none" stroke="#5e5e5e" stroke-width="1.7"/></svg>
<svg style="left:68px;top:595px;" width="18" height="17" viewBox="0 0 18 17"><rect x="4" y="0.8" width="10" height="3.6" fill="#5e5e5e"/><path d="M0.8 5.4 H17.2 V12.6 H14 V9.6 H4 V12.6 H0.8 Z" fill="#5e5e5e"/><rect x="4.9" y="10.6" width="8.2" height="5" fill="none" stroke="#5e5e5e" stroke-width="1.5"/></svg>
<svg style="left:70px;top:624px;" width="14" height="17" viewBox="0 0 14 17"><path d="M0.6 2.4 H13.4 V4 H0.6 Z M4.6 0.6 H9.4 V2.4 H4.6 Z M1.8 5.2 H12.2 V16.4 H1.8 Z" fill="#5e5e5e"/></svg>
<svg style="left:41px;top:761px;" width="12" height="15" viewBox="0 0 12 15"><path d="M3 1 V14 M3 10.6 Q9.6 10 9.6 4.6" fill="none" stroke="#6e6e6e" stroke-width="1.4"/><circle cx="3" cy="2.4" r="1.9" fill="#6e6e6e"/><circle cx="9.6" cy="3.6" r="1.9" fill="#6e6e6e"/><circle cx="3" cy="12.6" r="1.9" fill="#6e6e6e"/></svg>
<svg style="left:180px;top:762px;" width="14" height="13" viewBox="0 0 14 13"><path d="M4.4 2.4 H13 M4.4 6.4 H13 M4.4 10.4 H13" stroke="#6e6e6e" stroke-width="1.6"/><path d="M0.6 2.4 H2.6 M0.6 6.4 H2.6 M0.6 10.4 H2.6" stroke="#6e6e6e" stroke-width="1.6"/></svg>
<svg style="left:260px;top:762px;" width="13" height="13" viewBox="0 0 13 13"><circle cx="6.5" cy="6.5" r="5.6" fill="#6e6e6e"/><path d="M6.5 3.2 V7.4" stroke="#f2f2f2" stroke-width="1.5"/><circle cx="6.5" cy="9.6" r="0.9" fill="#f2f2f2"/></svg>
<svg style="left:357px;top:761px;" width="16" height="15" viewBox="0 0 16 15"><circle cx="6.8" cy="7" r="5.6" fill="none" stroke="#6e6e6e" stroke-width="1.3"/><path d="M6.8 3.4 V7.2 H4" fill="none" stroke="#6e6e6e" stroke-width="1.2"/><path d="M8.6 7.4 L15 11 L8.6 14.6 Z" fill="#6e6e6e" stroke="#f2f2f2" stroke-width="0.7"/></svg>
<svg style="left:447px;top:762px;" width="15" height="13" viewBox="0 0 15 13"><rect x="0.5" y="0.5" width="13.6" height="11.6" fill="#6e6e6e"/><path d="M2.8 3.4 L5.8 6.2 L2.8 9 M7.2 9.2 H11.2" fill="none" stroke="#f2f2f2" stroke-width="1.3"/></svg>
<svg style="left:542px;top:761px;" width="15" height="15" viewBox="0 0 15 15"><path d="M1.6 6.4 L8 1.8" stroke="#6e6e6e" stroke-width="3" fill="none"/><path d="M5.8 4.4 L13.4 12.8" stroke="#6e6e6e" stroke-width="2.4" fill="none"/></svg>
<svg style="left:616px;top:762px;" width="17" height="13" viewBox="0 0 17 13"><path d="M1 9.6 Q1 5.4 5 5 L7.4 1.6 Q8.6 0.4 10.4 1.4 L12.6 3.6 Q16.4 4.4 16.2 8.4 L13.6 8 L11.6 10.6 L8.6 8.4 L5 11.6 Z" fill="#5e5e5e"/></svg>
<svg style="left:780px;top:761px;" width="16" height="15" viewBox="0 0 16 15"><path d="M8 0.8 L15 4.4 L8 8 L1 4.4 Z" fill="#6e6e6e"/><path d="M2 7.4 L8 10.6 L14 7.4 M2 10.6 L8 13.8 L14 10.6" fill="none" stroke="#6e6e6e" stroke-width="1.4"/></svg>
<svg style="left:910px;top:762px;" width="11" height="12" viewBox="0 0 11 12"><path d="M0.6 0.6 L10 6 L0.6 11.4 Z" fill="#6e6e6e"/></svg>
<svg style="left:974px;top:761px;" width="15" height="15" viewBox="0 0 15 15"><path d="M1.2 12.8 Q0.4 4.4 8 3.4 Q12 3 14.2 0.8 Q15.2 9 10.4 12 Q6.4 14.4 2.6 12.4 Q6 10 9.4 6.4 Q5.4 8.6 1.2 12.8 Z" fill="#6e6e6e"/></svg>
<svg style="left:1395px;top:760px;" width="18" height="18" viewBox="0 0 18 18"><circle cx="8.8" cy="8.4" r="6.8" fill="none" stroke="#5e5e5e" stroke-width="1.4"/><path d="M4 13.4 L2 17 L7 14.8" fill="none" stroke="#5e5e5e" stroke-width="1.3"/></svg>
<svg style="left:8px;top:785px;" width="14" height="14" viewBox="0 0 14 14"><rect x="3" y="0.8" width="10" height="10" fill="none" stroke="#6e6e6e" stroke-width="1.2"/><path d="M0.8 3.4 V13 H10.6" fill="none" stroke="#6e6e6e" stroke-width="1.2"/></svg>
<svg style="left:971px;top:784px;" width="20" height="16" viewBox="0 0 20 16"><circle cx="5" cy="8.6" r="4" fill="#9b4ee8"/><circle cx="11" cy="8" r="4.4" fill="#2e6be6"/><circle cx="16" cy="5" r="3" fill="#2fb7c9"/><circle cx="8" cy="7" r="1.8" fill="#e85ac0"/></svg>
<svg style="left:1193px;top:784px;" width="23" height="19" viewBox="0 0 23 19"><path d="M4.6 8 Q3.4 3.4 8 3 Q10.6 3 11.6 5 Q13.4 2.6 16.6 3.6 Q19.8 5 18.8 8.6 Q21 12.6 16.6 14 H7 Q2 13.6 2.4 10.4 Q2.6 8.6 4.6 8 Z" fill="none" stroke="#111" stroke-width="2.1" stroke-linejoin="round"/><path d="M3 2.6 L19.4 17" stroke="#111" stroke-width="2.2"/></svg>
<svg style="left:1456px;top:785px;" width="15" height="15" viewBox="0 0 15 15"><g><rect x="4" y="7.4" width="9.6" height="6.6" fill="#6e6e6e"/><path d="M1.6 7.4 V5 Q1.6 1.8 4.4 1.8 Q7.2 1.8 7.2 5 V7.4" fill="none" stroke="#6e6e6e" stroke-width="1.5"/></g></svg>
<svg style="left:1482px;top:784px;" width="22" height="18" viewBox="0 0 22 18"><g opacity="0.95"><path d="M3.4 6.6 Q3.4 1.6 9 1.6 Q12.6 1.6 14 4.4 Q17.6 4.6 17.6 8 Q17.6 11.2 14 11.2 H5 Q1.2 11.2 1.2 8.6 Q1.2 7 3.4 6.6 Z" fill="#6e6e6e"/><path d="M7.4 5 Q7.6 3.2 9.4 3.2 Q11.2 3.2 11.2 4.8 Q11.2 6 9.4 6.8 V8" fill="none" stroke="#f2f2f2" stroke-width="1.2"/><circle cx="9.4" cy="9.6" r="0.8" fill="#f2f2f2"/><circle cx="16.4" cy="13.4" r="3.6" fill="#6e6e6e" stroke="#f2f2f2" stroke-width="0.8"/><circle cx="16.4" cy="13.4" r="1.3" fill="#f2f2f2"/></g></svg>
<div style="left:1366px;top:810px;width:3px;height:2px;background:#e8e8e8;"></div>
<div style="left:1372px;top:810px;width:6px;height:2px;background:#e8e8e8;"></div>
<div style="left:1381px;top:810px;width:2px;height:2px;background:#e8e8e8;"></div>
<div style="left:1385px;top:810px;width:6px;height:2px;background:#e8e8e8;"></div>
<div style="left:1394px;top:810px;width:6px;height:2px;background:#e8e8e8;"></div>
<div style="left:1406px;top:810px;width:12px;height:2px;background:#e8e8e8;"></div>
<div style="left:1420px;top:810px;width:11px;height:2px;background:#e8e8e8;"></div>
<div style="left:1506px;top:803px;width:1px;height:9px;background:#667080;"></div>
<span class="t" style="font-family:'Liberation Sans', 'Noto Sans CJK SC', sans-serif;font-size:16px;color:#000;letter-spacing:-0.499px;left:41.5px;top:10.00px;"><u>F</u>ile</span>
<span class="t" style="font-family:'Liberation Sans', 'Noto Sans CJK SC', sans-serif;font-size:16px;color:#000;letter-spacing:-0.295px;left:80.4px;top:10.00px;"><u>E</u>dit</span>
<span class="t" style="font-family:'Liberation Sans', 'Noto Sans CJK SC', sans-serif;font-size:16px;color:#000;letter-spacing:-0.522px;left:121.4px;top:10.00px;"><u>V</u>iew</span>
<span class="t" style="font-family:'Liberation Sans', 'Noto Sans CJK SC', sans-serif;font-size:16px;color:#000;letter-spacing:-0.295px;left:167.8px;top:10.00px;"><u>N</u>avigate</span>
<span class="t" style="font-family:'Liberation Sans', 'Noto Sans CJK SC', sans-serif;font-size:16px;color:#000;letter-spacing:-0.716px;left:244.2px;top:10.00px;"><u>C</u>ode</span>
<span class="t" style="font-family:'Liberation Sans', 'Noto Sans CJK SC', sans-serif;font-size:16px;color:#000;letter-spacing:-0.611px;left:295.7px;top:10.00px;"><u>R</u>efactor</span>
<span class="t" style="font-family:'Liberation Sans', 'Noto Sans CJK SC', sans-serif;font-size:16px;color:#000;letter-spacing:-0.196px;left:367.3px;top:10.00px;"><u>B</u>uild</span>
<span class="t" style="font-family:'Liberation Sans', 'Noto Sans CJK SC', sans-serif;font-size:16px;color:#000;letter-spacing:-0.992px;left:416px;top:10.00px;">R<u>u</u>n</span>
<span class="t" style="font-family:'Liberation Sans', 'Noto Sans CJK SC', sans-serif;font-size:16px;color:#000;letter-spacing:-0.648px;left:456.7px;top:10.00px;"><u>T</u>ools</span>
<span class="t" style="font-family:'Liberation Sans', 'Noto Sans CJK SC', sans-serif;font-size:16px;color:#000;letter-spacing:-0.450px;left:508.1px;top:10.00px;transform-origin:0 0;transform:scaleX(0.8493);">VC<u>S</u></span>
<span class="t" style="font-family:'Liberation Sans', 'Noto Sans CJK SC', sans-serif;font-size:16px;color:#000;letter-spacing:-0.187px;left:549.1px;top:10.00px;"><u>W</u>indow</span>
<span class="t" style="font-family:'Liberation Sans', 'Noto Sans CJK SC', sans-serif;font-size:16px;color:#000;letter-spacing:-0.355px;left:619.2px;top:10.00px;"><u>H</u>elp</span>
<span class="t" style="font-family:'Liberation Sans', 'Noto Sans CJK SC', sans-serif;font-size:16px;color:#787878;letter-spacing:-0.389px;left:682.3px;top:9.00px;">concurrent</span>
<span class="t" style="font-family:'Liberation Sans', 'Noto Sans CJK SC', sans-serif;font-size:16px;color:#787878;left:760.2px;top:9.00px;">-</span>
<span class="t" style="font-family:'Liberation Sans', 'Noto Sans CJK SC', sans-serif;font-size:16px;color:#787878;letter-spacing:-0.798px;left:769.1px;top:9.00px;">JonyAQSLockDemo.java</span>
<span class="t" style="font-family:'Liberation Sans', 'Noto Sans CJK SC', sans-serif;font-size:16px;color:#000;font-weight:700;letter-spacing:-0.528px;left:14.2px;top:43.00px;">concurrent</span>
<span class="t" style="font-family:'Liberation Sans', 'Noto Sans CJK SC', sans-serif;font-size:16px;color:#000;letter-spacing:-0.450px;left:111.4px;top:43.00px;transform-origin:0 0;transform:scaleX(0.9160);">src</span>
<span class="t" style="font-family:'Liberation Sans', 'Noto Sans CJK SC', sans-serif;font-size:16px;color:#000;letter-spacing:-0.447px;left:149.3px;top:43.00px;">main</span>
<span class="t" style="font-family:'Liberation Sans', 'Noto Sans CJK SC', sans-serif;font-size:16px;color:#000;letter-spacing:-0.740px;left:202.1px;top:43.00px;">java</span>
<span class="t" style="font-family:'Liberation Sans', 'Noto Sans CJK SC', sans-serif;font-size:16px;color:#000;letter-spacing:-0.445px;left:247.8px;top:43.00px;">com</span>
<span class="t" style="font-family:'Liberation Sans', 'Noto Sans CJK SC', sans-serif;font-size:16px;color:#000;letter-spacing:0.185px;left:295.6px;top:43.00px;">jony</span>
<span class="t" style="font-family:'Liberation Sans', 'Noto Sans CJK SC', sans-serif;font-size:16px;color:#000;letter-spacing:-0.213px;left:344.6px;top:43.00px;">lock</span>
<span class="t" style="font-family:'Liberation Sans', 'Noto Sans CJK SC', sans-serif;font-size:16px;color:#000;letter-spacing:-0.784px;left:410.7px;top:43.00px;">JonyAQSLockDemo</span>
<span class="t" style="font-family:'Liberation Sans', 'Noto Sans CJK SC', sans-serif;font-size:16px;color:#000;letter-spacing:-0.572px;left:581.8px;top:43.00px;">main</span>
<span class="t" style="font-family:'Liberation Sans', 'Noto Sans CJK SC', sans-serif;font-size:16px;color:#000;letter-spacing:-0.638px;left:654px;top:43.00px;">Lambda</span>
<span class="t" style="font-family:'Liberation Sans', 'Noto Sans CJK SC', sans-serif;font-size:16px;color:#000;letter-spacing:-0.838px;left:1044.5px;top:43.00px;">JonyAQSLockDemo</span>
<span class="t" style="font-family:'Liberation Sans', 'Noto Sans CJK SC', sans-serif;font-size:16px;color:#000;letter-spacing:-0.442px;left:64.4px;top:77.00px;">Project</span>
<span class="t" style="font-family:'Liberation Sans', 'Noto Sans CJK SC', sans-serif;font-size:14px;color:#000;letter-spacing:-0.425px;left:19.2px;top:119.1px;transform-origin:0 0;transform:rotate(-90deg) translate(0,-12px);">Project</span>
<span class="t" style="font-family:'Liberation Sans', 'Noto Sans CJK SC', sans-serif;font-size:14px;color:#000;letter-spacing:-0.190px;left:19.2px;top:606.5px;transform-origin:0 0;transform:rotate(-90deg) translate(0,-12px);">Structure</span>
<span class="t" style="font-family:'Liberation Sans', 'Noto Sans CJK SC', sans-serif;font-size:14px;color:#000;letter-spacing:-0.448px;left:19.2px;top:720px;transform-origin:0 0;transform:rotate(-90deg) translate(0,-12px);">Bookmarks</span>
<span class="t" style="font-family:'Liberation Sans', 'Noto Sans CJK SC', sans-serif;font-size:14px;color:#000;letter-spacing:-0.686px;left:1494.6px;top:101px;transform-origin:0 0;transform:rotate(90deg) translate(0,-12px);">Maven</span>
<span class="t" style="font-family:'Liberation Sans', 'Noto Sans CJK SC', sans-serif;font-size:14px;color:#000;letter-spacing:-0.592px;left:1494.6px;top:186.4px;transform-origin:0 0;transform:rotate(90deg) translate(0,-12px);">Database</span>
<span class="t" style="font-family:'Liberation Sans', 'Noto Sans CJK SC', sans-serif;font-size:14px;color:#000;letter-spacing:-0.407px;left:1494.6px;top:287px;transform-origin:0 0;transform:rotate(90deg) translate(0,-12px);">Nocalhost</span>
<span class="t" style="font-family:'Liberation Sans', 'Noto Sans CJK SC', sans-serif;font-size:14px;color:#000;letter-spacing:-0.224px;left:1494.6px;top:390px;transform-origin:0 0;transform:rotate(90deg) translate(0,-12px);">jclasslib</span>
<span class="t" style="font-family:'Liberation Sans', 'Noto Sans CJK SC', sans-serif;font-size:14px;color:#000;letter-spacing:-0.173px;left:1494.6px;top:598px;transform-origin:0 0;transform:rotate(90deg) translate(0,-12px);">BPMN-Activiti-Diagram</span>
<span class="t" style="font-family:'Liberation Sans', 'Noto Sans CJK SC', sans-serif;font-size:16px;color:#000;font-weight:700;letter-spacing:-0.618px;left:77.6px;top:104.00px;">concurrent</span>
<span class="t" style="font-family:'Liberation Sans', 'Noto Sans CJK SC', sans-serif;font-size:16px;color:#000;letter-spacing:-0.701px;left:98.8px;top:128.00px;">.idea</span>
<span class="t" style="font-family:'Liberation Sans', 'Noto Sans CJK SC', sans-serif;font-size:16px;color:#000;letter-spacing:-0.368px;left:98.8px;top:152.00px;">.mvn</span>
<span class="t" style="font-family:'Liberation Sans', 'Noto Sans CJK SC', sans-serif;font-size:16px;color:#000;letter-spacing:-0.450px;left:98.8px;top:175.00px;transform-origin:0 0;transform:scaleX(0.9110);">src</span>
<span class="t" style="font-family:'Liberation Sans', 'Noto Sans CJK SC', sans-serif;font-size:16px;color:#000;letter-spacing:-0.497px;left:119.8px;top:199.00px;">main</span>
<span class="t" style="font-family:'Liberation Sans', 'Noto Sans CJK SC', sans-serif;font-size:16px;color:#000;letter-spacing:-0.815px;left:140.4px;top:223.00px;">java</span>
<span class="t" style="font-family:'Liberation Sans', 'Noto Sans CJK SC', sans-serif;font-size:16px;color:#000;letter-spacing:-0.366px;left:162.4px;top:246.00px;">com.jony</span>
<span class="t" style="font-family:'Liberation Sans', 'Noto Sans CJK SC', sans-serif;font-size:16px;color:#000;letter-spacing:-0.254px;left:183.9px;top:270.00px;">atomic</span>
<span class="t" style="font-family:'Liberation Sans', 'Noto Sans CJK SC', sans-serif;font-size:16px;color:#000;letter-spacing:-0.249px;left:183.9px;top:293.00px;">concurrent</span>
<span class="t" style="font-family:'Liberation Sans', 'Noto Sans CJK SC', sans-serif;font-size:16px;color:#000;letter-spacing:-0.202px;left:183.9px;top:317.00px;">factory</span>
<span class="t" style="font-family:'Liberation Sans', 'Noto Sans CJK SC', sans-serif;font-size:16px;color:#000;letter-spacing:-0.338px;left:183.9px;top:341.00px;">lock</span>
<span class="t" style="font-family:'Liberation Sans', 'Noto Sans CJK SC', sans-serif;font-size:16px;color:#000;letter-spacing:-0.450px;left:205px;top:364.00px;transform-origin:0 0;transform:scaleX(0.9205);">CASLock</span>
<span class="t" style="font-family:'Liberation Sans', 'Noto Sans CJK SC', sans-serif;font-size:16px;color:#000;letter-spacing:-0.899px;left:205px;top:388.00px;">JonyAQSLock</span>
<span class="t" style="font-family:'Liberation Sans', 'Noto Sans CJK SC', sans-serif;font-size:16px;color:#000;letter-spacing:-0.804px;left:205px;top:412.00px;">JonyAQSLockDemo</span>
<span class="t" style="font-family:'Liberation Sans', 'Noto Sans CJK SC', sans-serif;font-size:16px;color:#999999;letter-spacing:-0.359px;left:163px;top:104.00px;">E:\TLWork\concurrent\concurrent</span>
<span class="t" style="font-family:'Liberation Sans', 'Noto Sans CJK SC', sans-serif;font-size:16px;color:#000;letter-spacing:-0.450px;left:482.3px;top:77.00px;transform-origin:0 0;transform:scaleX(0.9235);">EscapeTest.java</span>
<span class="t" style="font-family:'Liberation Sans', 'Noto Sans CJK SC', sans-serif;font-size:16px;color:#000;letter-spacing:-0.849px;left:644.4px;top:77.00px;">JonyAQSLock.java</span>
<span class="t" style="font-family:'Liberation Sans', 'Noto Sans CJK SC', sans-serif;font-size:16px;color:#000;letter-spacing:-0.818px;left:826px;top:77.00px;">JonyAQSLockDemo.java</span>
<span class="t" style="font-family:'Liberation Sans', 'Noto Sans CJK SC', sans-serif;font-size:16px;color:#000;letter-spacing:-0.438px;left:1048.5px;top:77.00px;">AbstractOwnableSynchronizer.java</span>
<span class="t" style="font-family:'Liberation Sans', 'Noto Sans CJK SC', sans-serif;font-size:16px;color:#000;letter-spacing:-0.353px;left:1343.5px;top:77.00px;">AbstractQu</span>
<span class="t" style="font-family:'Liberation Sans', 'Noto Sans CJK SC', sans-serif;font-size:14px;color:#787878;left:1387.6px;top:110.00px;">1</span>
<span class="t" style="font-family:'Liberation Sans', 'Noto Sans CJK SC', sans-serif;font-size:14px;color:#787878;left:1423px;top:110.00px;">1</span>
<span class="t" style="font-family:'DejaVu Sans Mono', 'Liberation Mono', 'Noto Sans CJK SC', monospace;font-size:13.5px;color:#b0b0b0;letter-spacing:-0.041px;left:438.5px;top:109.00px;">9</span>
<span class="t" style="font-family:'DejaVu Sans Mono', 'Liberation Mono', 'Noto Sans CJK SC', monospace;font-size:13.5px;color:#b0b0b0;letter-spacing:-0.033px;left:430.40000000000003px;top:135.00px;">10</span>
<span class="t" style="font-family:'DejaVu Sans Mono', 'Liberation Mono', 'Noto Sans CJK SC', monospace;font-size:13.5px;color:#b0b0b0;letter-spacing:-0.033px;left:430.40000000000003px;top:161.00px;">11</span>
<span class="t" style="font-family:'DejaVu Sans Mono', 'Liberation Mono', 'Noto Sans CJK SC', monospace;font-size:13.5px;color:#b0b0b0;letter-spacing:-0.033px;left:430.40000000000003px;top:187.00px;">12</span>
<span class="t" style="font-family:'DejaVu Sans Mono', 'Liberation Mono', 'Noto Sans CJK SC', monospace;font-size:13.5px;color:#b0b0b0;letter-spacing:-0.033px;left:430.40000000000003px;top:213.00px;">13</span>
<span class="t" style="font-family:'DejaVu Sans Mono', 'Liberation Mono', 'Noto Sans CJK SC', monospace;font-size:13.5px;color:#b0b0b0;letter-spacing:-0.033px;left:430.40000000000003px;top:239.00px;">14</span>
<span class="t" style="font-family:'DejaVu Sans Mono', 'Liberation Mono', 'Noto Sans CJK SC', monospace;font-size:13.5px;color:#b0b0b0;letter-spacing:-0.033px;left:430.40000000000003px;top:265.00px;">15</span>
<span class="t" style="font-family:'DejaVu Sans Mono', 'Liberation Mono', 'Noto Sans CJK SC', monospace;font-size:13.5px;color:#b0b0b0;letter-spacing:-0.033px;left:430.40000000000003px;top:291.00px;">16</span>
<span class="t" style="font-family:'DejaVu Sans Mono', 'Liberation Mono', 'Noto Sans CJK SC', monospace;font-size:13.5px;color:#b0b0b0;letter-spacing:-0.033px;left:430.40000000000003px;top:317.00px;">17</span>
<span class="t" style="font-family:'DejaVu Sans Mono', 'Liberation Mono', 'Noto Sans CJK SC', monospace;font-size:13.5px;color:#b0b0b0;letter-spacing:-0.033px;left:430.40000000000003px;top:343.00px;">18</span>
<span class="t" style="font-family:'DejaVu Sans Mono', 'Liberation Mono', 'Noto Sans CJK SC', monospace;font-size:13.5px;color:#b0b0b0;letter-spacing:-0.033px;left:430.40000000000003px;top:369.00px;">19</span>
<span class="t" style="font-family:'DejaVu Sans Mono', 'Liberation Mono', 'Noto Sans CJK SC', monospace;font-size:13.5px;color:#b0b0b0;letter-spacing:-0.033px;left:430.40000000000003px;top:395.00px;">20</span>
<span class="t" style="font-family:'DejaVu Sans Mono', 'Liberation Mono', 'Noto Sans CJK SC', monospace;font-size:13.5px;color:#b0b0b0;letter-spacing:-0.033px;left:430.40000000000003px;top:421.00px;clip-path:inset(0 0 5.5px 0);">21</span>
<span class="t" style="font-family:'DejaVu Sans Mono', 'Liberation Mono', 'Noto Sans CJK SC', monospace;font-size:15.65px;color:#0033b3;letter-spacing:0.008px;left:577.0px;top:134.00px;">for</span>
<span class="t" style="font-family:'DejaVu Sans Mono', 'Liberation Mono', 'Noto Sans CJK SC', monospace;font-size:15.65px;color:#000;letter-spacing:0.003px;left:614.7px;top:134.00px;">(</span>
<span class="t" style="font-family:'DejaVu Sans Mono', 'Liberation Mono', 'Noto Sans CJK SC', monospace;font-size:15.65px;color:#0033b3;letter-spacing:0.008px;left:624.125px;top:134.00px;">int</span>
<span class="t" style="font-family:'DejaVu Sans Mono', 'Liberation Mono', 'Noto Sans CJK SC', monospace;font-size:15.65px;color:#000;letter-spacing:0.003px;left:661.825px;top:134.00px;text-decoration:underline;text-underline-offset:2px;">i</span>
<span class="t" style="font-family:'DejaVu Sans Mono', 'Liberation Mono', 'Noto Sans CJK SC', monospace;font-size:15.65px;color:#000;letter-spacing:0.003px;left:680.6750000000001px;top:134.00px;">=</span>
<span class="t" style="font-family:'DejaVu Sans Mono', 'Liberation Mono', 'Noto Sans CJK SC', monospace;font-size:15.65px;color:#1750eb;letter-spacing:0.003px;left:699.5250000000001px;top:134.00px;">0</span>
<span class="t" style="font-family:'DejaVu Sans Mono', 'Liberation Mono', 'Noto Sans CJK SC', monospace;font-size:15.65px;color:#000;letter-spacing:0.003px;left:708.95px;top:134.00px;">;</span>
<span class="t" style="font-family:'DejaVu Sans Mono', 'Liberation Mono', 'Noto Sans CJK SC', monospace;font-size:15.65px;color:#000;letter-spacing:0.003px;left:727.8000000000001px;top:134.00px;text-decoration:underline;text-underline-offset:2px;">i</span>
<span class="t" style="font-family:'DejaVu Sans Mono', 'Liberation Mono', 'Noto Sans CJK SC', monospace;font-size:15.65px;color:#000;letter-spacing:0.003px;left:746.6500000000001px;top:134.00px;">&lt;</span>
<span class="t" style="font-family:'DejaVu Sans Mono', 'Liberation Mono', 'Noto Sans CJK SC', monospace;font-size:15.65px;color:#1750eb;letter-spacing:0.003px;left:765.5px;top:134.00px;">3</span>
<span class="t" style="font-family:'DejaVu Sans Mono', 'Liberation Mono', 'Noto Sans CJK SC', monospace;font-size:15.65px;color:#000;letter-spacing:0.003px;left:774.9250000000001px;top:134.00px;">;</span>
<span class="t" style="font-family:'DejaVu Sans Mono', 'Liberation Mono', 'Noto Sans CJK SC', monospace;font-size:15.65px;color:#000;letter-spacing:0.003px;left:793.7750000000001px;top:134.00px;text-decoration:underline;text-underline-offset:2px;">i</span>
<span class="t" style="font-family:'DejaVu Sans Mono', 'Liberation Mono', 'Noto Sans CJK SC', monospace;font-size:15.65px;color:#000;letter-spacing:0.006px;left:803.2px;top:134.00px;">++) {</span>
<span class="t" style="font-family:'DejaVu Sans Mono', 'Liberation Mono', 'Noto Sans CJK SC', monospace;font-size:15.65px;color:#000;letter-spacing:0.008px;left:614.7px;top:160.00px;">Thread thread =</span>
<span class="t" style="font-family:'DejaVu Sans Mono', 'Liberation Mono', 'Noto Sans CJK SC', monospace;font-size:15.65px;color:#0033b3;letter-spacing:0.008px;left:765.5px;top:160.00px;">new</span>
<span class="t" style="font-family:'DejaVu Sans Mono', 'Liberation Mono', 'Noto Sans CJK SC', monospace;font-size:15.65px;color:#000;letter-spacing:0.008px;left:803.2px;top:160.00px;">Thread(()-&gt;{</span>
<span class="t" style="font-family:'DejaVu Sans Mono', 'Liberation Mono', 'Noto Sans CJK SC', monospace;font-size:15.65px;color:#8c8c8c;font-style:italic;letter-spacing:0.003px;left:652.4000000000001px;top:186.00px;">//</span>
<span class="t" style="font-family:'DejaVu Sans Mono', 'Noto Serif CJK SC', serif;font-size:14.8px;color:#8c8c8c;font-style:italic;letter-spacing:-0.805px;left:671.25px;top:187.00px;">加锁</span>
<span class="t" style="font-family:'DejaVu Sans Mono', 'Liberation Mono', 'Noto Sans CJK SC', monospace;font-size:15.65px;color:#871094;font-style:italic;letter-spacing:0.007px;left:652.4000000000001px;top:212.00px;">lock</span>
<span class="t" style="font-family:'DejaVu Sans Mono', 'Liberation Mono', 'Noto Sans CJK SC', monospace;font-size:15.65px;color:#000;letter-spacing:0.007px;left:690.1px;top:212.00px;">.lock();</span>
<span class="t" style="font-family:'DejaVu Sans Mono', 'Liberation Mono', 'Noto Sans CJK SC', monospace;font-size:15.65px;color:#0033b3;letter-spacing:0.008px;left:652.4000000000001px;top:238.00px;">try</span>
<span class="t" style="font-family:'DejaVu Sans Mono', 'Liberation Mono', 'Noto Sans CJK SC', monospace;font-size:15.65px;color:#000;letter-spacing:0.003px;left:690.1px;top:238.00px;">{</span>
<span class="t" style="font-family:'DejaVu Sans Mono', 'Liberation Mono', 'Noto Sans CJK SC', monospace;font-size:15.65px;color:#8c8c8c;font-style:italic;letter-spacing:0.003px;left:690.1px;top:264.00px;">//</span>
<span class="t" style="font-family:'DejaVu Sans Mono', 'Noto Serif CJK SC', serif;font-size:14.8px;color:#8c8c8c;font-style:italic;left:718.375px;top:265.00px;">临界区代码</span>
<span class="t" style="font-family:'DejaVu Sans Mono', 'Liberation Mono', 'Noto Sans CJK SC', monospace;font-size:15.65px;color:#8c8c8c;font-style:italic;letter-spacing:0.003px;left:690.1px;top:290.00px;">//</span>
<span class="t" style="font-family:'DejaVu Sans Mono', 'Liberation Mono', 'Noto Sans CJK SC', monospace;font-size:15.65px;color:#008dde;font-style:italic;letter-spacing:0.007px;left:718.375px;top:290.00px;">TODO</span>
<span class="t" style="font-family:'DejaVu Sans Mono', 'Noto Serif CJK SC', serif;font-size:14.8px;color:#008dde;font-style:italic;letter-spacing:0.026px;left:765.5px;top:291.00px;">业务逻辑：读写操作不能保证线程安全</span>
<span class="t" style="font-family:'DejaVu Sans Mono', 'Liberation Mono', 'Noto Sans CJK SC', monospace;font-size:15.65px;color:#0033b3;letter-spacing:0.008px;left:690.1px;top:316.00px;">for</span>
<span class="t" style="font-family:'DejaVu Sans Mono', 'Liberation Mono', 'Noto Sans CJK SC', monospace;font-size:15.65px;color:#000;letter-spacing:0.003px;left:727.8000000000001px;top:316.00px;">(</span>
<span class="t" style="font-family:'DejaVu Sans Mono', 'Liberation Mono', 'Noto Sans CJK SC', monospace;font-size:15.65px;color:#0033b3;letter-spacing:0.008px;left:737.225px;top:316.00px;">int</span>
<span class="t" style="font-family:'DejaVu Sans Mono', 'Liberation Mono', 'Noto Sans CJK SC', monospace;font-size:15.65px;color:#000;letter-spacing:0.003px;left:774.9250000000001px;top:316.00px;text-decoration:underline;text-underline-offset:2px;">j</span>
<span class="t" style="font-family:'DejaVu Sans Mono', 'Liberation Mono', 'Noto Sans CJK SC', monospace;font-size:15.65px;color:#000;letter-spacing:0.003px;left:793.7750000000001px;top:316.00px;">=</span>
<span class="t" style="font-family:'DejaVu Sans Mono', 'Liberation Mono', 'Noto Sans CJK SC', monospace;font-size:15.65px;color:#1750eb;letter-spacing:0.003px;left:812.625px;top:316.00px;">0</span>
<span class="t" style="font-family:'DejaVu Sans Mono', 'Liberation Mono', 'Noto Sans CJK SC', monospace;font-size:15.65px;color:#000;letter-spacing:0.003px;left:822.0500000000001px;top:316.00px;">;</span>
<span class="t" style="font-family:'DejaVu Sans Mono', 'Liberation Mono', 'Noto Sans CJK SC', monospace;font-size:15.65px;color:#000;letter-spacing:0.003px;left:840.9000000000001px;top:316.00px;text-decoration:underline;text-underline-offset:2px;">j</span>
<span class="t" style="font-family:'DejaVu Sans Mono', 'Liberation Mono', 'Noto Sans CJK SC', monospace;font-size:15.65px;color:#000;letter-spacing:0.003px;left:859.75px;top:316.00px;">&lt;</span>
<span class="t" style="font-family:'DejaVu Sans Mono', 'Liberation Mono', 'Noto Sans CJK SC', monospace;font-size:15.65px;color:#1750eb;letter-spacing:0.006px;left:878.6px;top:316.00px;">10000</span>
<span class="t" style="font-family:'DejaVu Sans Mono', 'Liberation Mono', 'Noto Sans CJK SC', monospace;font-size:15.65px;color:#000;letter-spacing:0.003px;left:925.7250000000001px;top:316.00px;">;</span>
<span class="t" style="font-family:'DejaVu Sans Mono', 'Liberation Mono', 'Noto Sans CJK SC', monospace;font-size:15.65px;color:#000;letter-spacing:0.003px;left:944.575px;top:316.00px;text-decoration:underline;text-underline-offset:2px;">j</span>
<span class="t" style="font-family:'DejaVu Sans Mono', 'Liberation Mono', 'Noto Sans CJK SC', monospace;font-size:15.65px;color:#000;letter-spacing:0.006px;left:954.0px;top:316.00px;">++) {</span>
<span class="t" style="font-family:'DejaVu Sans Mono', 'Liberation Mono', 'Noto Sans CJK SC', monospace;font-size:15.65px;color:#871094;font-style:italic;letter-spacing:0.008px;left:727.8000000000001px;top:342.00px;">sum</span>
<span class="t" style="font-family:'DejaVu Sans Mono', 'Liberation Mono', 'Noto Sans CJK SC', monospace;font-size:15.65px;color:#000;letter-spacing:0.008px;left:756.075px;top:342.00px;">++;</span>
<span class="t" style="font-family:'DejaVu Sans Mono', 'Liberation Mono', 'Noto Sans CJK SC', monospace;font-size:15.65px;color:#000;letter-spacing:0.003px;left:690.1px;top:368.00px;">}</span>
<span class="t" style="font-family:'DejaVu Sans Mono', 'Liberation Mono', 'Noto Sans CJK SC', monospace;font-size:15.65px;color:#000;letter-spacing:0.003px;left:652.4000000000001px;top:394.00px;">}</span>
<span class="t" style="font-family:'DejaVu Sans Mono', 'Liberation Mono', 'Noto Sans CJK SC', monospace;font-size:15.65px;color:#0033b3;letter-spacing:0.008px;left:671.25px;top:394.00px;">finally</span>
<span class="t" style="font-family:'DejaVu Sans Mono', 'Liberation Mono', 'Noto Sans CJK SC', monospace;font-size:15.65px;color:#000;letter-spacing:0.003px;left:746.6500000000001px;top:394.00px;">{</span>
<span class="t" style="font-family:'DejaVu Sans Mono', 'Liberation Mono', 'Noto Sans CJK SC', monospace;font-size:15.65px;color:#8c8c8c;font-style:italic;letter-spacing:0.003px;left:690.1px;top:420.00px;clip-path:inset(0 0 6.6px 0);">//</span>
<span class="t" style="font-family:'DejaVu Sans Mono', 'Noto Serif CJK SC', serif;font-size:14.8px;color:#8c8c8c;font-style:italic;letter-spacing:0.195px;left:718.375px;top:421.00px;clip-path:inset(0 0 6.6px 0);">解锁</span>
<span class="t" style="font-family:'Liberation Sans', 'Noto Sans CJK SC', sans-serif;font-size:16px;color:#000;letter-spacing:-0.450px;left:33.5px;top:438.00px;transform-origin:0 0;transform:scaleX(0.9220);">Run:</span>
<span class="t" style="font-family:'Liberation Sans', 'Noto Sans CJK SC', sans-serif;font-size:16px;color:#000;letter-spacing:-0.562px;left:109.8px;top:438.00px;">ReentrantLockDemo</span>
<span class="t" style="font-family:'DejaVu Sans Mono', 'Liberation Mono', 'Noto Sans CJK SC', monospace;font-size:15.65px;color:#4a4a4a;letter-spacing:-0.007px;left:109.3px;top:469.00px;">"C:\Program Files\Java\jdk1.8.0_211\bin\java.exe" ...</span>
<span class="t" style="font-family:'DejaVu Sans Mono', 'Liberation Mono', 'Noto Sans CJK SC', monospace;font-size:15.65px;color:#000;letter-spacing:-0.079px;left:109.3px;top:495.00px;">30000</span>
<span class="t" style="font-family:'DejaVu Sans Mono', 'Liberation Mono', 'Noto Sans CJK SC', monospace;font-size:15.65px;color:#00007f;letter-spacing:-0.002px;left:109.3px;top:547.00px;">Process finished with exit code 0</span>
<span class="t" style="font-family:'Liberation Sans', 'Noto Sans CJK SC', sans-serif;font-size:14px;color:#000;letter-spacing:-0.180px;left:58.8px;top:762.00px;">Version Control</span>
<span class="t" style="font-family:'Liberation Sans', 'Noto Sans CJK SC', sans-serif;font-size:14px;color:#000;letter-spacing:-0.450px;left:198.7px;top:762.00px;transform-origin:0 0;transform:scaleX(0.9391);">TODO</span>
<span class="t" style="font-family:'Liberation Sans', 'Noto Sans CJK SC', sans-serif;font-size:14px;color:#000;letter-spacing:-0.418px;left:278.7px;top:762.00px;">Problems</span>
<span class="t" style="font-family:'Liberation Sans', 'Noto Sans CJK SC', sans-serif;font-size:14px;color:#000;letter-spacing:-0.107px;left:377.8px;top:762.00px;">Profiler</span>
<span class="t" style="font-family:'Liberation Sans', 'Noto Sans CJK SC', sans-serif;font-size:14px;color:#000;letter-spacing:-0.371px;left:466.9px;top:762.00px;">Terminal</span>
<span class="t" style="font-family:'Liberation Sans', 'Noto Sans CJK SC', sans-serif;font-size:14px;color:#000;letter-spacing:-0.328px;left:562.2px;top:762.00px;">Build</span>
<span class="t" style="font-family:'Liberation Sans', 'Noto Sans CJK SC', sans-serif;font-size:14px;color:#000;letter-spacing:-0.348px;left:638.4px;top:762.00px;">Nocalhost Console</span>
<span class="t" style="font-family:'Liberation Sans', 'Noto Sans CJK SC', sans-serif;font-size:14px;color:#000;letter-spacing:-0.476px;left:800.4px;top:762.00px;">Dependencies</span>
<span class="t" style="font-family:'Liberation Sans', 'Noto Sans CJK SC', sans-serif;font-size:14px;color:#000;letter-spacing:-0.663px;left:928.2px;top:762.00px;">Run</span>
<span class="t" style="font-family:'Liberation Sans', 'Noto Sans CJK SC', sans-serif;font-size:14px;color:#000;letter-spacing:-0.311px;left:993.8px;top:762.00px;">Spring</span>
<span class="t" style="font-family:'Liberation Sans', 'Noto Sans CJK SC', sans-serif;font-size:14px;color:#000;letter-spacing:-0.562px;left:1417px;top:762.00px;">Event Log</span>
<span class="t" style="font-family:'Liberation Sans', 'Noto Sans CJK SC', sans-serif;font-size:16px;color:#000;letter-spacing:-0.421px;left:32.4px;top:785.00px;">Build completed successfully in 11 sec, 91 ms (3 minutes ago)</span>
<span class="t" style="font-family:'Liberation Sans', 'Noto Sans CJK SC', sans-serif;font-size:16px;color:#000;letter-spacing:-0.224px;left:997px;top:785.00px;">Waiting for enter DevMode</span>
<span class="t" style="font-family:'Liberation Sans', 'Noto Sans CJK SC', sans-serif;font-size:16px;color:#000;letter-spacing:-0.709px;left:1229px;top:785.00px;">20:28</span>
<span class="t" style="font-family:'Liberation Sans', 'Noto Sans CJK SC', sans-serif;font-size:16px;color:#000;letter-spacing:-0.450px;left:1281px;top:785.00px;transform-origin:0 0;transform:scaleX(0.8229);">CRLF</span>
<span class="t" style="font-family:'Liberation Sans', 'Noto Sans CJK SC', sans-serif;font-size:16px;color:#000;letter-spacing:-0.450px;left:1329.4px;top:785.00px;transform-origin:0 0;transform:scaleX(0.9355);">UTF-8</span>
<span class="t" style="font-family:'Liberation Sans', 'Noto Sans CJK SC', sans-serif;font-size:16px;color:#000;letter-spacing:-0.881px;left:1384.7px;top:785.00px;">4 spaces</span>
<span class="t" style="font-family:'Liberation Sans', 'Noto Sans CJK SC', sans-serif;font-size:17.5px;color:rgba(255,255,255,0.85);letter-spacing:0.093px;left:1329.7px;top:772.00px;text-shadow:0 0 2px rgba(90,90,90,0.9),0 0 1px rgba(90,90,90,0.9);">@稀土掘金技术社区</span>
<span class="t" style="font-family:'Liberation Sans', 'Noto Sans CJK SC', sans-serif;font-size:13.2px;color:#3a3a3a;font-weight:700;left:1393.4px;top:44.00px;">文</span>
<span class="t" style="font-family:'Liberation Sans', 'Noto Sans CJK SC', sans-serif;font-size:13.4px;color:#2b7de0;font-weight:700;left:1403px;top:48.00px;">A</span>
<span class="t" style="font-family:'Liberation Sans', 'Noto Sans CJK SC', sans-serif;font-size:18px;color:#6e6e6e;font-weight:700;font-style:italic;left:1492.5px;top:76.00px;">m</span>
<div style="left:89px;top:474px;width:104px;height:46px;box-sizing:border-box;border:3.5px solid #f02b1d;border-radius:5px;"></div>
<div style="left:1499.6px;top:244px;width:10px;height:66.5px;border-radius:5px;background:#666;overflow:hidden;"><div style="left:1.5px;top:23px;width:7.5px;height:43px;background:repeating-linear-gradient(90deg,#3f9a55 0 1.2px,#7cc98c 1.2px 2.4px);border-radius:0 0 4px 4px;"></div></div>
<div style="left:1331px;top:692px;width:179px;height:29px;border-radius:4px;background:#ffffff;box-shadow:0 0 2px rgba(0,0,0,0.28);"></div>
<svg style="left:1296px;top:685px;" width="42" height="40" viewBox="0 0 42 40"><path d="M5 8 Q5 4.6 8.4 4.2 L33 1.6 Q37 1.4 37.4 5 L40 30 Q40.2 33.6 36.8 34.2 L11 38 Q7.4 38.2 7 35 Z" fill="#f4511e"/><path d="M31 10.4 Q23 5.6 15.6 9.6 Q11 13 16 16.6 L27.6 20.4 Q31 22.4 27.6 25.4 Q21 29 12.4 25" fill="none" stroke="#ffffff" stroke-width="4.4" stroke-linecap="round"/></svg>
<span class="t" style="left:1343.5px;top:696.5px;font-size:19px;font-weight:700;color:#1e6fd9;font-family:'Liberation Sans','Noto Sans CJK SC',sans-serif;">中</span>
<svg style="left:1374px;top:697px;" width="18" height="20" viewBox="0 0 18 20"><circle cx="4" cy="5.4" r="2" fill="none" stroke="#1e6fd9" stroke-width="1.6"/><path d="M11.4 8.4 Q14.6 8.4 13.6 12 Q13 14.4 10.6 15.8" fill="none" stroke="#1e6fd9" stroke-width="2.2" stroke-linecap="round"/><circle cx="12" cy="9.4" r="1.7" fill="#1e6fd9"/></svg>
<svg style="left:1400px;top:695px;" width="20" height="24" viewBox="0 0 20 24"><rect x="6.4" y="1" width="7.2" height="13" rx="3.6" fill="#1e6fd9"/><path d="M3 10 Q3 17.4 10 17.4 Q17 17.4 17 10 M10 17.4 V21.6 M6 21.8 H14" fill="none" stroke="#1e6fd9" stroke-width="1.8"/></svg>
<svg style="left:1428px;top:698px;" width="20" height="17" viewBox="0 0 20 17"><rect x="1" y="1.4" width="18" height="14" rx="2.4" fill="none" stroke="#1e6fd9" stroke-width="1.9"/><path d="M4.4 5.4 H6.4 M8 5.4 H10 M11.6 5.4 H13.6 M15 5.4 H16 M4.4 8.6 H6.4 M8 8.6 H10 M11.6 8.6 H13.6 M15 8.6 H16 M5.6 12 H14.4" stroke="#1e6fd9" stroke-width="1.8"/></svg>
<svg style="left:1456px;top:697px;" width="22" height="19" viewBox="0 0 22 19"><path d="M7 1 Q11 4.4 15 1 L21 4.4 L18.6 9 L16.4 8 V18 H5.6 V8 L3.4 9 L1 4.4 Z" fill="#1e6fd9"/></svg>
<svg style="left:1486px;top:697px;" width="20" height="19" viewBox="0 0 20 19"><rect x="1" y="1" width="7.4" height="7.4" rx="1.6" fill="#1e6fd9"/><rect x="11" y="1" width="7.4" height="7.4" rx="3.7" fill="#1e6fd9"/><rect x="1" y="10.6" width="7.4" height="7.4" rx="1.6" fill="#1e6fd9"/><rect x="11" y="10.6" width="7.4" height="7.4" rx="1.6" fill="#1e6fd9"/></svg>
</div></body></html>
